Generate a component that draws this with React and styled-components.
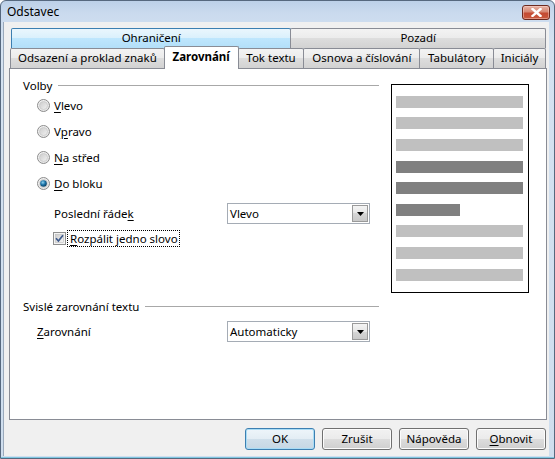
import React, { useId } from 'react';
import styled, { createGlobalStyle } from 'styled-components';

const Global = createGlobalStyle`
  html, body { margin: 0; padding: 0; background: #ffffff; }
  body { font-family: "Noto Sans", "Segoe UI", sans-serif; font-size: 11.5px; color: #000; }
  * { box-sizing: border-box; }
  u { text-decoration-thickness: 1px; text-underline-offset: 2px; }
`;

const Window = styled.div`
  width: 555px;
  height: 459px;
  border: 1px solid #56687e;
  border-radius: 6px 6px 0 0;
  background: linear-gradient(#bcd0e8 0px, #cadaee 12px, #d4e2f1 40px, #cfdeee 100%);
  display: flex;
  flex-direction: column;
  padding: 0 5px 2px 2px;
  box-shadow: inset 0 -1px 0 #7fc6e0;
`;

const TitleBar = styled.div`
  height: 21px;
  display: flex;
  align-items: flex-start;
  justify-content: space-between;
  padding-left: 4px;
`;

const Title = styled.span`
  margin-top: 2px;
  font-size: 12px;
  color: #000;
`;

const CloseButton = styled.div`
  margin-top: 4px;
  margin-right: -1px;
  width: 28px;
  height: 15px;
  border: 1px solid #6d2a1f;
  border-radius: 3px;
  background: linear-gradient(#e8b3a6 0%, #d78772 45%, #c44a32 55%, #c9593d 100%);
  box-shadow: inset 0 0 0 1px rgba(255, 220, 210, 0.45);
  display: flex;
  align-items: center;
  justify-content: center;
`;

const Client = styled.div`
  flex: 1;
  background: #f0f0f0;
  padding: 6px 3px 0 5px;
  display: flex;
  flex-direction: column;
  border-left: 1px solid #9aa9bb;
`;

const TabRowTop = styled.div`
  display: flex;
  height: 20px;
  padding-left: 2px;
`;

const TabRowBottom = styled.div`
  display: flex;
  align-items: flex-end;
  height: 22px;
  margin-top: -2px;
  padding-left: 1px;
  position: relative;
  z-index: 2;
`;

const Tab = styled.div`
  width: ${(p) => p.$w}px;
  height: ${(p) => (p.$selected ? 23 : 20)}px;
  margin-bottom: ${(p) => (p.$selected ? -1 : 0)}px;
  margin-left: ${(p) => (p.$first ? 0 : -1)}px;
  border: 1px solid ${(p) => (p.$hover ? '#3c7fb1' : '#898c95')};
  border-bottom: none;
  border-radius: 2px 2px 0 0;
  background: ${(p) =>
    p.$selected
      ? '#ffffff'
      : p.$hover
      ? 'linear-gradient(#eaf6fd 0%, #d9f0fc 50%, #bee6fd 50%, #b3dff8 100%)'
      : 'linear-gradient(#f3f3f3 0%, #ebebeb 50%, #dddddd 50%, #d2d2d2 100%)'};
  font-weight: ${(p) => (p.$selected ? 700 : 400)};
  display: flex;
  align-items: center;
  justify-content: center;
  white-space: nowrap;
  line-height: 1;
  padding-bottom: ${(p) => (p.$selected ? 2 : 1)}px;
  position: relative;
  z-index: ${(p) => (p.$selected ? 3 : 1)};
`;

const Panel = styled.div`
  width: 538px;
  height: 352px;
  background: #ffffff;
  border: 1px solid #898c95;
  padding: 9px 17px 0 13px;
  display: flex;
  flex-direction: column;
  position: relative;
  z-index: 1;
`;

const TopSection = styled.div`
  display: grid;
  grid-template-columns: 356px 138px;
  column-gap: 12px;
  align-items: start;
`;

const Column = styled.div`
  display: flex;
  flex-direction: column;
`;

const GroupHeader = styled.div`
  display: flex;
  align-items: center;
  gap: 6px;
  height: 14px;
  width: 356px;
  margin-top: ${(p) => p.$mt || 0}px;
  &::after {
    content: '';
    flex: 1;
    height: 1px;
    background: #a8a8a8;
    margin-top: 1px;
  }
`;

const RadioRow = styled.div`
  height: 26px;
  display: flex;
  align-items: center;
  gap: 4px;
  padding-left: 14px;
`;

const FieldRow = styled.div`
  height: 21px;
  display: flex;
  align-items: center;
  margin-top: ${(p) => p.$mt}px;
  padding-left: ${(p) => p.$indent}px;
`;

const FieldLabel = styled.span`
  width: ${(p) => p.$w}px;
  flex-shrink: 0;
`;

const Select = styled.div`
  width: 143px;
  height: 21px;
  border: 1px solid #a5acb5;
  background: #fff;
  display: flex;
  align-items: center;
  padding-left: 2px;
`;

const SelectValue = styled.span`
  flex: 1;
`;

const DropButton = styled.div`
  width: 16px;
  height: 17px;
  margin-right: 1px;
  border: 1px solid #9a9a9a;
  background: linear-gradient(#f4f4f4 0%, #e6e6e6 50%, #d6d6d6 50%, #c9c9c9 100%);
  display: flex;
  align-items: center;
  justify-content: center;
`;

const CheckRow = styled.div`
  height: 20px;
  display: flex;
  align-items: center;
  gap: 2px;
  margin-top: 4px;
  padding-left: 30px;
`;

const FocusLabel = styled.span`
  outline: 1px dotted #000;
  outline-offset: 0;
  padding: 0 1px 0 2px;
  line-height: 15px;
`;

const Preview = styled.div`
  margin-top: 6px;
  width: 138px;
  height: 209px;
  border: 1px solid #000;
  background: #fff;
  padding: 11px 4px 0 4px;
  display: flex;
  flex-direction: column;
  align-items: flex-start;
`;

const Bar = styled.div`
  height: 12px;
  width: ${(p) => (p.$short ? 64 : 127)}px;
  background: ${(p) => (p.$dark ? '#808080' : '#c0c0c0')};
  margin-top: ${(p) => p.$mt}px;
`;

const ButtonRow = styled.div`
  display: flex;
  justify-content: flex-end;
  gap: 7px;
  margin-top: 8px;
`;

const Button = styled.div`
  width: 70px;
  height: 22px;
  border: 1px solid ${(p) => (p.$default ? '#3c7fb1' : '#707070')};
  border-radius: 3px;
  background: ${(p) =>
    p.$default
      ? 'linear-gradient(#eef5fa 0%, #e3edf4 50%, #d0dfea 50%, #c6d7e4 100%)'
      : 'linear-gradient(#f2f2f2 0%, #ebebeb 50%, #dddddd 50%, #cfcfcf 100%)'};
  box-shadow: inset 0 0 0 1px ${(p) => (p.$default ? '#a9dcf5' : '#fcfcfc')};
  display: flex;
  align-items: center;
  justify-content: center;
  line-height: 1;
`;

function Radio({ checked }) {
  const id = useId().replace(/:/g, '');
  return (
    <svg width="13" height="13" viewBox="0 0 13 13">
      <defs>
        <linearGradient id={`o${id}`} x1="0" y1="0" x2="1" y2="1">
          <stop offset="0" stopColor="#f6f6f6" />
          <stop offset="1" stopColor="#e2e2e2" />
        </linearGradient>
        <linearGradient id={`i${id}`} x1="0" y1="0" x2="1" y2="1">
          <stop offset="0" stopColor="#cbcbcb" />
          <stop offset="1" stopColor="#f2f2f2" />
        </linearGradient>
        <radialGradient id={`d${id}`} cx="0.4" cy="0.35" r="0.7">
          <stop offset="0" stopColor="#8fd2f0" />
          <stop offset="0.5" stopColor="#1b73a8" />
          <stop offset="1" stopColor="#0a3a5c" />
        </radialGradient>
      </defs>
      <circle cx="6.5" cy="6.5" r="6" fill={`url(#o${id})`} stroke="#8c8c8c" strokeWidth="1" />
      <circle cx="6.5" cy="6.5" r="4" fill={`url(#i${id})`} stroke="#c9c9c9" strokeWidth="0.8" />
      {checked && <circle cx="6.5" cy="6.5" r="3.3" fill={`url(#d${id})`} />}
    </svg>
  );
}

function Checkbox() {
  const id = useId().replace(/:/g, '');
  return (
    <svg width="13" height="13" viewBox="0 0 13 13">
      <defs>
        <linearGradient id={`c${id}`} x1="0" y1="0" x2="1" y2="1">
          <stop offset="0" stopColor="#cdcdcd" />
          <stop offset="1" stopColor="#f5f5f5" />
        </linearGradient>
      </defs>
      <rect x="0.5" y="0.5" width="12" height="12" fill="#f4f4f4" stroke="#8e8f8f" />
      <rect x="2.5" y="2.5" width="8" height="8" fill={`url(#c${id})`} stroke="#bdbdbd" strokeWidth="0.6" />
      <path d="M3 6.3 L5.4 9 L10 3.2" fill="none" stroke="#3d5a8c" strokeWidth="1.7" />
    </svg>
  );
}

function Arrow() {
  return (
    <svg width="7" height="4" viewBox="0 0 7 4">
      <path d="M0 0 H7 L3.5 4 Z" fill="#000" />
    </svg>
  );
}

const tabsBottom = [
  { label: 'Odsazení a proklad znaků', w: 155 },
  { label: 'Zarovnání', w: 75, selected: true },
  { label: 'Tok textu', w: 67 },
  { label: 'Osnova a číslování', w: 117 },
  { label: 'Tabulátory', w: 75 },
  { label: 'Iniciály', w: 53 },
];

const bars = [
  { mt: 0 },
  { mt: 9 },
  { mt: 10 },
  { mt: 10, dark: true },
  { mt: 9, dark: true },
  { mt: 10, dark: true, short: true },
  { mt: 9 },
  { mt: 10 },
  { mt: 10 },
];

export default function App() {
  return (
    <>
      <Global />
      <Window>
        <TitleBar>
          <Title>Odstavec</Title>
          <CloseButton>
            <svg width="11" height="9" viewBox="0 0 11 9">
              <path d="M1.5 1 L9.5 8 M9.5 1 L1.5 8" stroke="#fff" strokeWidth="2.4" strokeLinecap="square" />
            </svg>
          </CloseButton>
        </TitleBar>
        <Client>
          <TabRowTop>
            <Tab $w={281} $first $hover>Ohraničení</Tab>
            <Tab $w={256}>Pozadí</Tab>
          </TabRowTop>
          <TabRowBottom>
            {tabsBottom.map((t, i) => (
              <Tab key={t.label} $w={t.w} $first={i === 0} $selected={t.selected}>
                {t.label}
              </Tab>
            ))}
          </TabRowBottom>
          <Panel>
            <TopSection>
              <Column>
                <GroupHeader>Volby</GroupHeader>
                <RadioRow>
                  <Radio />
                  <span><u>V</u>levo</span>
                </RadioRow>
                <RadioRow>
                  <Radio />
                  <span>V<u>p</u>ravo</span>
                </RadioRow>
                <RadioRow>
                  <Radio />
                  <span><u>N</u>a střed</span>
                </RadioRow>
                <RadioRow>
                  <Radio checked />
                  <span><u>D</u>o bloku</span>
                </RadioRow>
                <FieldRow $mt={7} $indent={31}>
                  <FieldLabel $w={173}>Poslední řáde<u>k</u></FieldLabel>
                  <Select>
                    <SelectValue>Vlevo</SelectValue>
                    <DropButton><Arrow /></DropButton>
                  </Select>
                </FieldRow>
                <CheckRow>
                  <Checkbox />
                  <FocusLabel><u>R</u>ozpálit jedno slovo</FocusLabel>
                </CheckRow>
              </Column>
              <Preview>
                {bars.map((b, i) => (
                  <Bar key={i} $mt={b.mt} $dark={b.dark} $short={b.short} />
                ))}
              </Preview>
            </TopSection>
            <GroupHeader $mt={6}>Svislé zarovnání textu</GroupHeader>
            <FieldRow $mt={8} $indent={14}>
              <FieldLabel $w={190}><u>Z</u>arovnání</FieldLabel>
              <Select>
                <SelectValue>Automaticky</SelectValue>
                <DropButton><Arrow /></DropButton>
              </Select>
            </FieldRow>
          </Panel>
          <ButtonRow>
            <Button $default>OK</Button>
            <Button>Zrušit</Button>
            <Button>Nápověda</Button>
            <Button><span><u>O</u>bnovit</span></Button>
          </ButtonRow>
        </Client>
      </Window>
    </>
  );
}
